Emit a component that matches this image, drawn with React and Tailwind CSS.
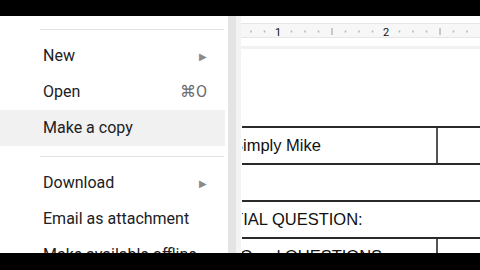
import React from "react";

const Separator = () => <div className="ml-[40px] mr-[1px] h-[1px] bg-[#e3e3e3]" />;

function MenuItem({ label, right, active }) {
  return (
    <div
      className={`flex h-[36px] items-center pl-[43px] pr-[18px] text-[16px] text-[#202124] ${
        active ? "bg-[#f1f1f1]" : ""
      }`}
    >
      <span className="flex-1 whitespace-nowrap">{label}</span>
      {right === "arrow" && <span className="text-[10px] text-[#8a8a8a]">▶</span>}
      {right && right !== "arrow" && (
        <span className="text-[16px] text-[#6b6b6b]">{right}</span>
      )}
    </div>
  );
}

function Ruler() {
  const marks = [];
  for (let k = -3; k <= 14; k++) {
    const x = 42 + k * 13.5;
    if (k % 8 === 0) continue;
    if (k % 4 === 0) {
      marks.push(<line key={k} x1={x} x2={x} y1={4} y2={11} stroke="#9a9a9a" strokeWidth="1" />);
    } else {
      marks.push(<rect key={k} x={x - 0.75} y={6.5} width={1.5} height={2} fill="#b5b5b5" />);
    }
  }
  return (
    <svg width="244" height="15" className="block">
      {marks}
      <text x="42" y="11.5" fontSize="11" textAnchor="middle" fill="#111" fontFamily="Roboto, sans-serif">1</text>
      <text x="150" y="11.5" fontSize="11" textAnchor="middle" fill="#111" fontFamily="Roboto, sans-serif">2</text>
    </svg>
  );
}

function Row({ children, divider, textOffset }) {
  return (
    <div className="flex h-[37px] border-t-2 border-[#2a2a2a]">
      <div className="relative flex w-[194px] shrink-0 items-center overflow-hidden">
        <span
          className="absolute whitespace-nowrap text-[16.5px] text-[#111]"
          style={{ left: textOffset }}
        >
          {children}
        </span>
      </div>
      {divider ? <div className="w-[2px] bg-[#555]" /> : <div className="w-[2px]" />}
      <div className="flex-1" />
    </div>
  );
}

export default function App() {
  return (
    <div className="flex h-[270px] w-[480px] flex-col overflow-hidden bg-white" style={{ fontFamily: "Roboto, 'Liberation Sans', sans-serif" }}>
      <div className="h-[16px] shrink-0 bg-black" />
      <div className="flex min-h-0 flex-1">
        {/* menu */}
        <div className="w-[225px] shrink-0 bg-white pt-[13px]">
          <Separator />
          <div className="h-[8px]" />
          <MenuItem label="New" right="arrow" />
          <MenuItem label="Open" right="⌘O" />
          <MenuItem label="Make a copy" active />
          <div className="h-[10px]" />
          <Separator />
          <div className="h-[8px]" />
          <MenuItem label="Download" right="arrow" />
          <MenuItem label="Email as attachment" />
          <MenuItem label="Make available offline" />
        </div>
        <div className="w-[3px] shrink-0 bg-white" />
        <div className="w-[8px] shrink-0 bg-[#e4e4e4]" />

        {/* document */}
        <div className="flex min-w-0 flex-1 bg-white">
          <div className="w-[5px] shrink-0 bg-[#f3f3f3]" />
          <div className="min-w-0 flex-1 overflow-hidden pt-[7px]" style={{ fontFamily: "'Liberation Sans', Arial, sans-serif" }}>
            <div className="h-[15px] -ml-[5px] border-y border-[#e6e6e6] bg-[#f7f7f7]">
              <Ruler />
            </div>
            <div className="mt-[8px] h-[3px] bg-[#f2f2f2]" />
            <div className="ml-[1px] mt-[77px]">
              <Row divider textOffset={-10}>Simply Mike</Row>
              <Row textOffset={-26} />
              <Row textOffset={-30}>INITIAL QUESTION:</Row>
              <Row divider textOffset={-2}>Good QUESTIONS</Row>
            </div>
          </div>
        </div>
      </div>
      <div className="h-[17px] shrink-0 bg-black" />
    </div>
  );
}
